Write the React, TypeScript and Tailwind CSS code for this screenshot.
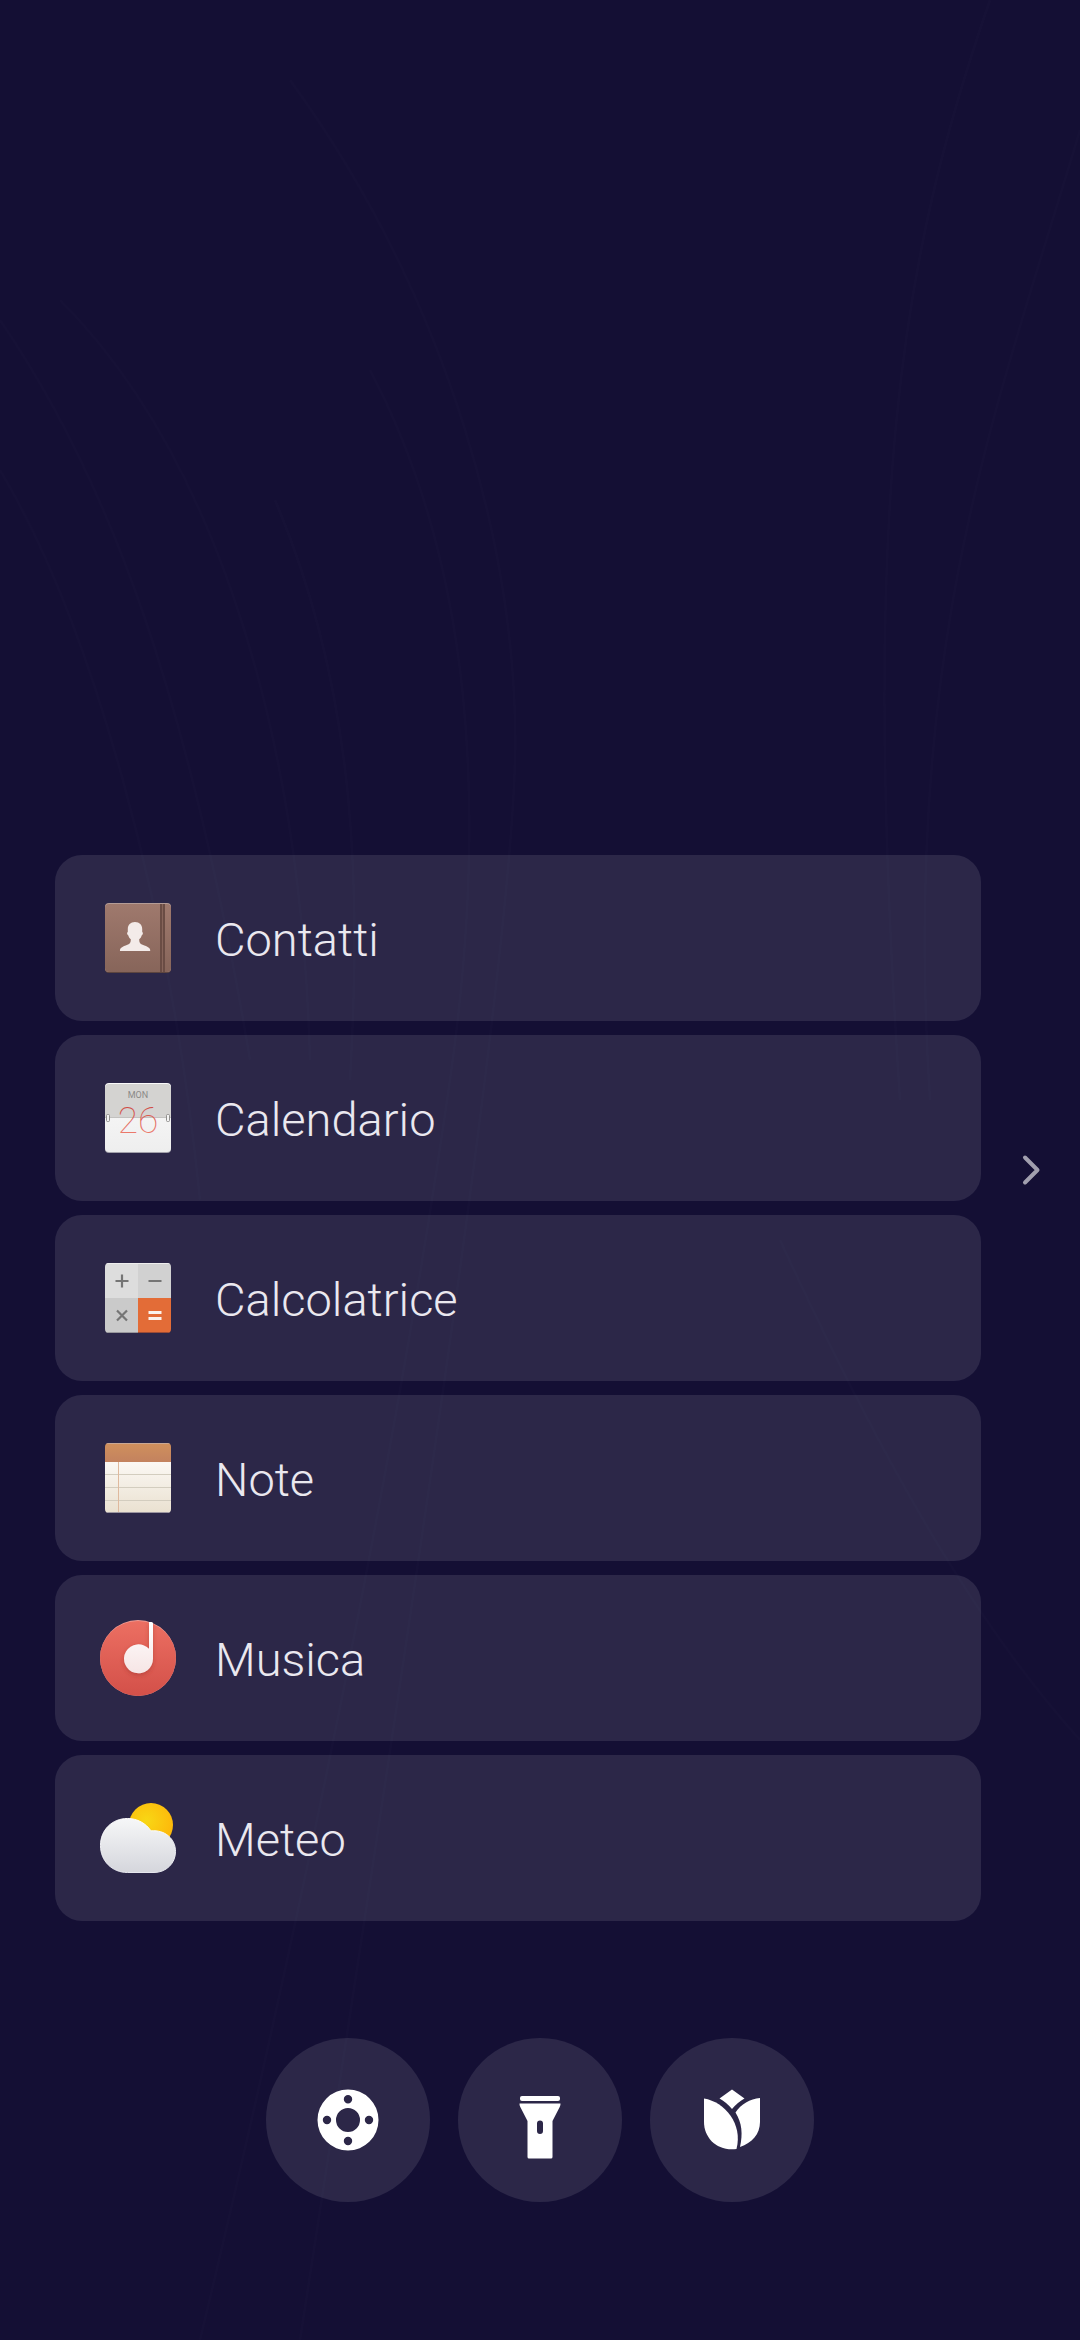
import React from "react";

function ContactsIcon() {
  return (
    <svg viewBox="0 0 76 76" className="size-19" aria-hidden="true">
      <defs>
        <linearGradient id="book" x1="0" y1="0" x2="0" y2="1">
          <stop offset="0" stopColor="#9f796d" />
          <stop offset="1" stopColor="#87655a" />
        </linearGradient>
      </defs>
      <rect x="5" y="4" width="66" height="69" rx="4" fill="#5d453f" />
      <rect x="5" y="3" width="66" height="69" rx="4" fill="#b49c96" />
      <rect x="5" y="4" width="66" height="68" rx="4" fill="url(#book)" />
      <path d="M60 4h2v68h-2zM63 4h2v68h-2z" fill="#6a4c44" />
      <path d="M62 4h1v68h-1z" fill="#86645a" />
      <path
        d="M35 22c4.500 0 7.200 3 7.200 7v3c1 .3 1 2.500-.4 3.200-.6 2-1.400 3.200-2.600 4 0 3 .6 4.400 3.400 5.600 5 2 8 3 7.600 6.200H20c-.4-3.200 2.600-4.200 7.400-6.200 2.800-1.200 3.400-2.600 3.400-5.600-1.200-.8-2-2-2.600-4-1.400-.7-1.400-2.900-.4-3.200v-3c0-4 2.700-7 7.200-7z"
        fill="#f3ebe9"
      />
    </svg>
  );
}

function CalendarIcon() {
  return (
    <svg viewBox="0 0 76 76" className="size-19" aria-hidden="true">
      <defs>
        <linearGradient id="page" x1="0" y1="0" x2="0" y2="1">
          <stop offset="0" stopColor="#fafafa" />
          <stop offset="1" stopColor="#eeeeee" />
        </linearGradient>
        <linearGradient id="day" x1="0" y1="0" x2="0" y2="1">
          <stop offset="0.2" stopColor="#cf4c45" />
          <stop offset="0.8" stopColor="#ec7a6c" />
        </linearGradient>
      </defs>
      <rect x="5" y="4" width="66" height="69" rx="4" fill="#a3a2ab" />
      <rect x="5" y="3" width="66" height="69" rx="4" fill="url(#page)" />
      <path d="M5 38V8a4 4 0 0 1 4-4h58a4 4 0 0 1 4 4v30z" fill="#d4d3d1" />
      <path d="M5 37.500h66" stroke="#c2c1bf" />
      <rect x="6.500" y="34.500" width="3" height="7" rx="1" fill="#f4f4f4" stroke="#908f8d" />
      <rect x="66.500" y="34.500" width="3" height="7" rx="1" fill="#f4f4f4" stroke="#908f8d" />
      <text x="38" y="18" textAnchor="middle" fontSize="9" fill="#8b8a88" className="font-[Roboto,sans-serif]">
        MON
      </text>
      <text x="38" y="53" textAnchor="middle" fontSize="37" fontWeight="250" fill="url(#day)" className="font-[Roboto,sans-serif]">
        26
      </text>
    </svg>
  );
}

function CalculatorIcon() {
  return (
    <svg viewBox="0 0 76 76" className="size-19" aria-hidden="true">
      <clipPath id="calc">
        <rect x="5" y="3" width="66" height="70" rx="4" />
      </clipPath>
      <g clipPath="url(#calc)">
        <path d="M5 3h33v35H5z" fill="#dddddd" />
        <path d="M38 3h33v35H38z" fill="#d1d1d1" />
        <path d="M5 38h33v35H5z" fill="#cacaca" />
        <path d="M38 38h33v35H38z" fill="#e36c37" />
        <path d="M5 3h66v1H5z" fill="#eeeeee" />
        <path d="M5 72h33v1H5z" fill="#98979c" />
        <path d="M38 72h33v1H38z" fill="#9b4b36" />
      </g>
      <path d="M15.500 21h13M22 14.500v13M48.500 21h13M17 50.500l10 10M27 50.500l-10 10" stroke="#757575" strokeWidth="2.200" fill="none" />
      <path d="M48.500 52.500h13M48.500 58.500h13" stroke="#fbf3ee" strokeWidth="2.800" />
    </svg>
  );
}

function NotesIcon() {
  return (
    <svg viewBox="0 0 76 76" className="size-19" aria-hidden="true">
      <defs>
        <linearGradient id="paper" x1="0" y1="0" x2="0" y2="1">
          <stop offset="0" stopColor="#fbf8f4" />
          <stop offset="1" stopColor="#eae1d0" />
        </linearGradient>
        <linearGradient id="binding" x1="0" y1="0" x2="0" y2="1">
          <stop offset="0" stopColor="#d0905c" />
          <stop offset="1" stopColor="#c3825f" />
        </linearGradient>
        <clipPath id="pad">
          <rect x="5" y="3" width="66" height="70" rx="4" />
        </clipPath>
      </defs>
      <g clipPath="url(#pad)">
        <path d="M5 22h66v51H5z" fill="url(#paper)" />
        <path d="M5 3h66v19H5z" fill="url(#binding)" />
        <path d="M5 3h66v1H5z" fill="#c8a794" />
        <path d="M5 34.500h66M5 47.500h66M5 60.500h66" stroke="#d3cdbf" />
        <path d="M18.500 22v51" stroke="#dfb99d" />
        <path d="M5 72h66v1H5z" fill="#9c96a0" />
      </g>
    </svg>
  );
}

function MusicIcon() {
  return (
    <svg viewBox="0 0 76 76" className="size-19" aria-hidden="true">
      <defs>
        <linearGradient id="disc" x1="0" y1="0" x2="0" y2="1">
          <stop offset="0" stopColor="#ec6f62" />
          <stop offset="1" stopColor="#d35049" />
        </linearGradient>
        <linearGradient id="note" x1="0" y1="0" x2="0" y2="1">
          <stop offset="0" stopColor="#ffffff" />
          <stop offset="1" stopColor="#f6e5e5" />
        </linearGradient>
        <filter id="noteShadow" x="-30%" y="-30%" width="160%" height="160%">
          <feDropShadow dx="0" dy="2" stdDeviation="2" floodColor="#a02f2c" floodOpacity="0.5" />
        </filter>
      </defs>
      <circle cx="38" cy="38" r="38" fill="#f09d95" />
      <path d="M0 38a38 37 0 0 1 76 0a38 38 0 0 1-76 0z" fill="url(#disc)" />
      <path
        d="M49 2h2.500l1.500.800V38.500A14.500 14.500 0 1 1 49 28.800z"
        fill="url(#note)"
        filter="url(#noteShadow)"
      />
    </svg>
  );
}

function WeatherIcon() {
  return (
    <svg viewBox="0 0 76 76" className="size-19" aria-hidden="true">
      <defs>
        <radialGradient id="sun" cx="0.4" cy="0.4" r="0.6">
          <stop offset="0" stopColor="#f8d715" />
          <stop offset="1" stopColor="#fdb90b" />
        </radialGradient>
        <linearGradient id="cloud" x1="0" y1="0" x2="0" y2="1">
          <stop offset="0" stopColor="#f6f7f8" />
          <stop offset="1" stopColor="#d5d6dc" />
        </linearGradient>
        <linearGradient id="cloudRim" x1="0" y1="0" x2="0" y2="1">
          <stop offset="0" stopColor="#ffffff" />
          <stop offset="1" stopColor="#e6e7ee" />
        </linearGradient>
      </defs>
      <circle cx="51" cy="25" r="22" fill="url(#sun)" />
      <path
        d="M27.500 18.500c10 0 18.500 5 23.500 12.400 14-1.400 24.500 8 24.500 20.600 0 12-9.500 21-21.500 21H27.500C12 72.500.5 61 .5 45.500S12 18.500 27.500 18.500z"
        fill="url(#cloud)"
        stroke="url(#cloudRim)"
      />
    </svg>
  );
}

function ReelIcon() {
  return (
    <svg viewBox="0 0 64 64" className="size-16" aria-hidden="true">
      <path
        fill="#fff"
        fillRule="evenodd"
        d="M32 1.500a30.500 30.500 0 1 1 0 61a30.500 30.500 0 1 1 0-61zM32 20a12 12 0 1 0 0 24a12 12 0 1 0 0-24zM32 7a4.200 4.200 0 1 0 0 8.400a4.200 4.200 0 1 0 0-8.400zM32 48.800a4.200 4.200 0 1 0 0 8.400a4.200 4.200 0 1 0 0-8.400zM11 27.800a4.200 4.200 0 1 0 0 8.400a4.200 4.200 0 1 0 0-8.400zM53 27.800a4.200 4.200 0 1 0 0 8.400a4.200 4.200 0 1 0 0-8.400z"
      />
    </svg>
  );
}

function TorchIcon() {
  return (
    <svg viewBox="0 -8 64 80" className="h-20 w-16" aria-hidden="true">
      <rect x="12" y="8" width="40" height="5" rx="2" fill="#fff" />
      <path
        fill="#fff"
        fillRule="evenodd"
        d="M11.500 15.500h41c0 1.500-.3 2.500-.8 3.600L44.500 33v36a1.500 1.500 0 0 1-1.500 1.500H21a1.500 1.500 0 0 1-1.500-1.500V33l-7.200-13.900c-.5-1.100-.8-2.100-.8-3.600zM32 32.500a3 3 0 0 0-3 3v7.500a3 3 0 0 0 6 0v-7.500a3 3 0 0 0-3-3z"
      />
    </svg>
  );
}

function TulipIcon() {
  return (
    <svg viewBox="0 0 64 64" className="size-16" aria-hidden="true">
      <g fill="#fff">
        <path d="M32 1.500L44.500 10.500Q38 14 32 21Q26 14 19.500 10.500z" />
        <path d="M4 10.500C25 14 43 36 36.500 61C17 63.500 4 50 4 34z" />
        <path d="M60 10C50 11 41 16 35.500 24.500C42 35 43 46 40 59C52 55 60 46 60 34z" />
      </g>
    </svg>
  );
}

// Barely visible strands sweeping over the dark backdrop.
const strands = [
  "M0 320C110 480 190 700 250 1060",
  "M0 470C90 620 170 900 200 1200",
  "M60 300C200 440 300 700 310 1060",
  "M290 80C450 300 520 560 515 760S430 1500 300 2340",
  "M370 370C470 560 490 800 450 1080S330 1800 200 2340",
  "M275 500C360 700 360 900 350 1080",
  "M990 0C900 260 860 500 900 1100",
  "M1080 130C1000 400 900 640 930 1100",
  "M780 1240C900 1500 990 1640 1080 1740",
];

function Backdrop() {
  return (
    <svg
      viewBox="0 0 1080 2340"
      preserveAspectRatio="none"
      className="pointer-events-none absolute inset-0 size-full"
      aria-hidden="true"
    >
      <g fill="none" stroke="#fff">
        {strands.map((d) => (
          <React.Fragment key={d}>
            <path d={d} strokeWidth="44" strokeOpacity="0.005" />
            <path d={d} strokeWidth="3" strokeOpacity="0.01" />
          </React.Fragment>
        ))}
      </g>
    </svg>
  );
}

const apps = [
  { name: "Contatti", Icon: ContactsIcon },
  { name: "Calendario", Icon: CalendarIcon },
  { name: "Calcolatrice", Icon: CalculatorIcon },
  { name: "Note", Icon: NotesIcon },
  { name: "Musica", Icon: MusicIcon },
  { name: "Meteo", Icon: WeatherIcon },
];

const shortcuts = [
  { label: "Video", Icon: ReelIcon },
  { label: "Torcia", Icon: TorchIcon },
  { label: "Galleria", Icon: TulipIcon },
];

export default function App() {
  return (
    <main className="relative isolate grid min-h-screen grid-cols-[1fr_99px] bg-[#140f34] font-[Roboto,sans-serif] text-[#eae8ef]">
      <Backdrop />
      <div className="z-10 col-span-2 col-start-1 row-start-1 flex flex-col justify-end gap-[117px] pb-[138px]">
        <ul className="mr-[99px] ml-[55px] flex flex-col gap-3.5">
          {apps.map(({ name, Icon }) => (
            <li key={name}>
              <button
                type="button"
                className="flex h-[166px] w-full items-center gap-[39px] rounded-[27px] bg-white/10 px-[45px] text-left"
              >
                <Icon />
                <span className="pt-0.5 text-[47px] leading-none font-[350]">{name}</span>
              </button>
            </li>
          ))}
        </ul>
        <nav aria-label="Scorciatoie" className="flex justify-center gap-7">
          {shortcuts.map(({ label, Icon }) => (
            <button
              key={label}
              type="button"
              aria-label={label}
              className="flex size-[164px] items-center justify-center rounded-full bg-white/10"
            >
              <Icon />
            </button>
          ))}
        </nav>
      </div>
      <button
        type="button"
        aria-label="Avanti"
        className="z-10 col-start-2 row-start-1 flex h-24 items-center justify-center self-center"
      >
        <svg viewBox="0 0 32 32" className="size-8" aria-hidden="true">
          <path d="M10 3.500L22.500 16L10 28.500" fill="none" stroke="#a19fae" strokeWidth="4" strokeLinecap="round" strokeLinejoin="round" />
        </svg>
      </button>
    </main>
  );
}
